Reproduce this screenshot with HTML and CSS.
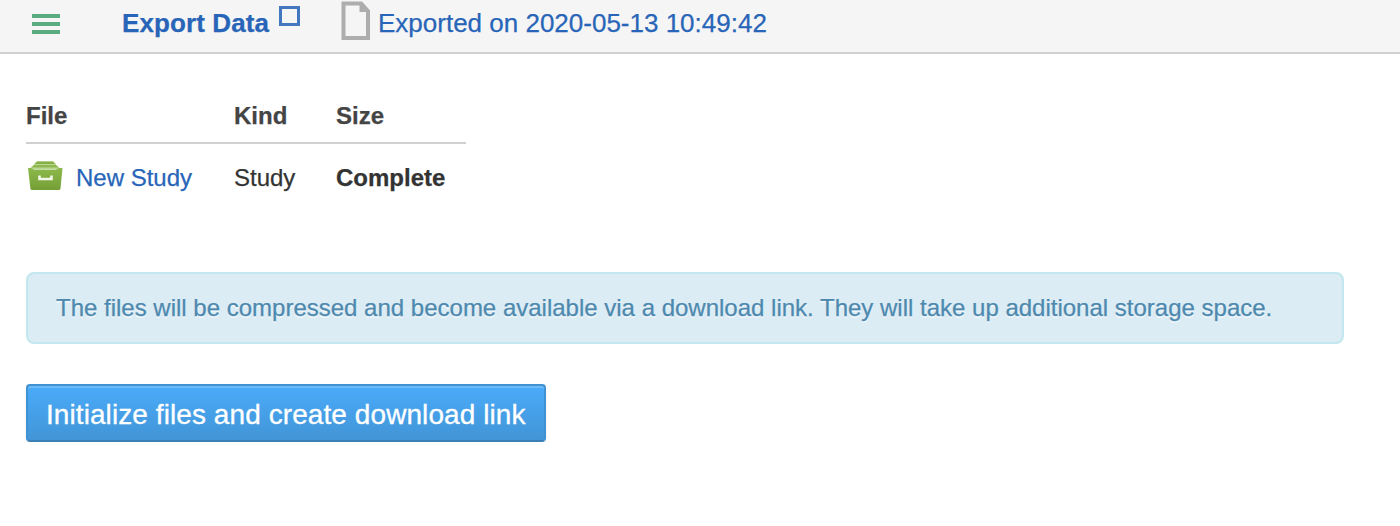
FILE: index.html
```html
<!DOCTYPE html>
<html lang="en">
<head>
<meta charset="utf-8">
<title>Export Data</title>
<link rel="stylesheet" href="styles.css">
</head>
<body>
<header class="topbar">
  <svg class="menu" width="28" height="20" viewBox="0 0 28 20"><path d="M0 0h28v4H0zM0 8h28v4H0zM0 16h28v4H0z" fill="#5bab81"/></svg>
  <a class="crumb"><span class="crumb-title">Export Data</span><span class="box"></span></a>
  <svg class="doc" width="30" height="40" viewBox="0 0 30 40"><path d="M2.500 2.500H20L27 10V37H2.500Z" fill="#f5f5f5" stroke="#adadad" stroke-width="4"/><path d="M18.500 2V11H28V9L21 1Z" fill="#adadad"/></svg>
  <a class="exported">Exported on 2020-05-13 10:49:42</a>
</header>
<main class="content">
  <table class="files">
    <thead><tr><th class="col-file">File</th><th class="col-kind">Kind</th><th class="col-size">Size</th></tr></thead>
    <tbody><tr>
      <td><a class="study"><svg class="drawer" width="38" height="32" viewBox="0 0 38 32">
        <defs><linearGradient id="g" x1="0" y1="0" x2="0" y2="1"><stop offset="0" stop-color="#8cb94b"/><stop offset="1" stop-color="#759f36"/></linearGradient></defs>
        <path d="M10.500 1.500H27.500L30 4V5L33 7V9H5V7L8 5V4Z" fill="#b9d692"/>
        <path d="M11 1.500H27L29 4H9Z" fill="#86b043"/>
        <path d="M8 5H30L32.500 7.500H5.500Z" fill="#8fb851"/>
        <path d="M2 8H5L8 9.500H30L33 8H36.500L34.500 28.500Q34.300 30 33 30H6Q4.600 30 4.400 28.500Z" fill="url(#g)"/>
        <path d="M13.500 15.500V19H25.500V15.500" fill="none" stroke="#f2f7ea" stroke-width="2.600"/>
      </svg>New Study</a></td>
      <td>Study</td>
      <td class="status">Complete</td>
    </tr></tbody>
  </table>
  <div class="notice">The files will be compressed and become available via a download link. They will take up additional storage space.</div>
  <button class="submit" type="button">Initialize files and create download link</button>
</main>
</body>
</html>
```
FILE: styles.css
```css
* { box-sizing: border-box; }
body {
  margin: 0;
  background: #fff;
  color: #333;
  font: 24px/36px "Liberation Sans", Arial, sans-serif;
  -webkit-text-stroke: .25px currentColor;
}
.topbar {
  display: flex;
  align-items: flex-start;
  height: 54px;
  padding-left: 32px;
  background: #f5f5f5;
  border-bottom: 2px solid #d0d0d0;
  color: #2865b8;
  font-size: 26px;
  line-height: 30px;
  white-space: nowrap;
}
.menu { margin-top: 14px; }
.crumb {
  display: flex;
  width: 219px;
  margin-left: 62px;
  padding-top: 8px;
  font-weight: bold;
}
.crumb-title { width: 157px; letter-spacing: .1px; }
.box {
  width: 21px;
  height: 20px;
  margin-top: -2px;
  border: 3px solid #4378c0;
}
.doc { margin-top: 1px; }
.exported { margin-left: 7px; padding-top: 8px; }
.content { padding: 37px 56px 0 26px; }
.files {
  width: 440px;
  table-layout: fixed;
  border-collapse: collapse;
  white-space: nowrap;
}
.files th {
  height: 52px;
  padding: 0 0 2px;
  border-bottom: 2px solid #d0d0d0;
  color: #444;
  text-align: left;
}
.files td { height: 68px; padding: 0; }
.col-file { width: 208px; }
.col-kind { width: 102px; }
.study { display: flex; align-items: center; color: #2865b8; }
.drawer { margin: 0 12px 4px 0; }
.status { font-weight: bold; }
.notice {
  height: 72px;
  margin-top: 61px;
  padding: 16px 28px;
  border: 2px solid #c3e7ee;
  border-radius: 8px;
  background: #dcecf5;
  color: #4d89ae;
  text-shadow: 0 2px 0 rgba(255, 255, 255, .5);
  white-space: nowrap;
}
.submit {
  display: block;
  width: 520px;
  height: 58px;
  margin-top: 40px;
  padding: 3px 0 0 18px;
  border: 2px solid #4092d3;
  border-bottom-color: #3b80b4;
  border-radius: 4px;
  background: linear-gradient(#4aabfa, #4295d6);
  box-shadow: inset 0 2px 0 #6dbaf9, 0 2px 4px rgba(0, 0, 0, .06);
  color: #fff;
  font: 28px/34px "Liberation Sans", Arial, sans-serif;
  letter-spacing: .08px;
  text-align: left;
  -webkit-text-stroke: .3px #fff;
  white-space: nowrap;
}
```
